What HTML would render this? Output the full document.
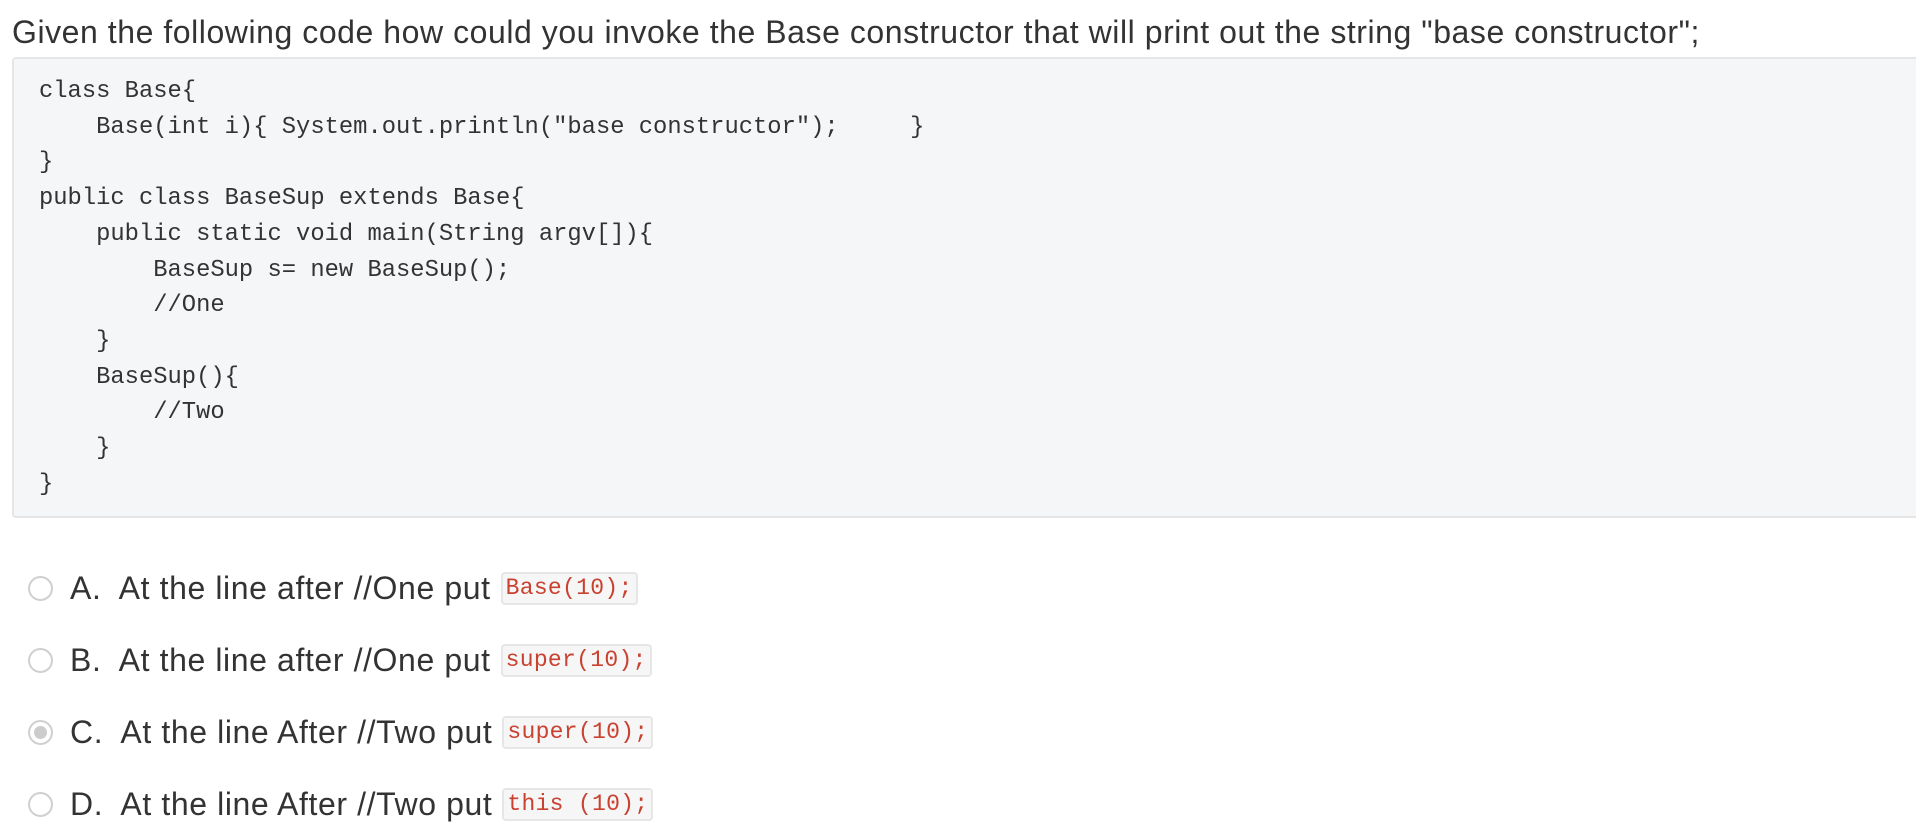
<!DOCTYPE html>
<html><head><meta charset="utf-8"><style>
html,body{margin:0;padding:0;background:#fff;width:1916px;height:836px;overflow:hidden}
body{font-family:"Liberation Sans",sans-serif;color:#333}
.title{position:absolute;left:12px;top:12px;font-size:32px;line-height:40px;white-space:nowrap;color:#333;letter-spacing:0.55px}
.code{position:absolute;left:12px;top:57px;width:1920px;height:457px;background:#f5f6f8;border:2px solid #e6e6e6;border-radius:4px}
pre{margin:0;position:absolute;left:39px;top:74px;font-family:"Liberation Mono",monospace;font-size:23.8px;line-height:35.7px;color:#333}
.radio{position:absolute;left:28px;width:21px;height:21px;border:2px solid #d0d0d0;border-radius:50%;background:#fff}
.radio.sel::after{content:"";position:absolute;left:4px;top:4px;width:13px;height:13px;border-radius:50%;background:#ccc}
.lbl{position:absolute;left:70px;font-size:32px;line-height:40px;color:#333;letter-spacing:0.6px;white-space:nowrap}
.chip{display:inline-block;font-family:"Liberation Mono",monospace;font-size:23px;line-height:29px;letter-spacing:0.3px;color:#c9412f;background:#f6f6f7;border:2px solid #e6e6e6;border-radius:4px;padding:0 3px;vertical-align:middle;position:relative;top:-2px;margin-left:10px}
</style></head><body>
<div class="title">Given the following code how could you invoke the Base constructor that will print out the string "base constructor";</div>
<div class="code"></div>
<pre>class Base{
    Base(int i){ System.out.println("base constructor");     }
}
public class BaseSup extends Base{
    public static void main(String argv[]){
        BaseSup s= new BaseSup();
        //One
    }
    BaseSup(){
        //Two
    }
}</pre>
<div class="radio" style="top:576px"></div><div class="lbl" style="top:568px">A.&nbsp; At the line after //One put<span class="chip">Base(10);</span></div>
<div class="radio" style="top:648px"></div><div class="lbl" style="top:640px">B.&nbsp; At the line after //One put<span class="chip">super(10);</span></div>
<div class="radio sel" style="top:720px"></div><div class="lbl" style="top:712px">C.&nbsp; At the line After //Two put<span class="chip">super(10);</span></div>
<div class="radio" style="top:792px"></div><div class="lbl" style="top:784px">D.&nbsp; At the line After //Two put<span class="chip">this (10);</span></div>
</body></html>
